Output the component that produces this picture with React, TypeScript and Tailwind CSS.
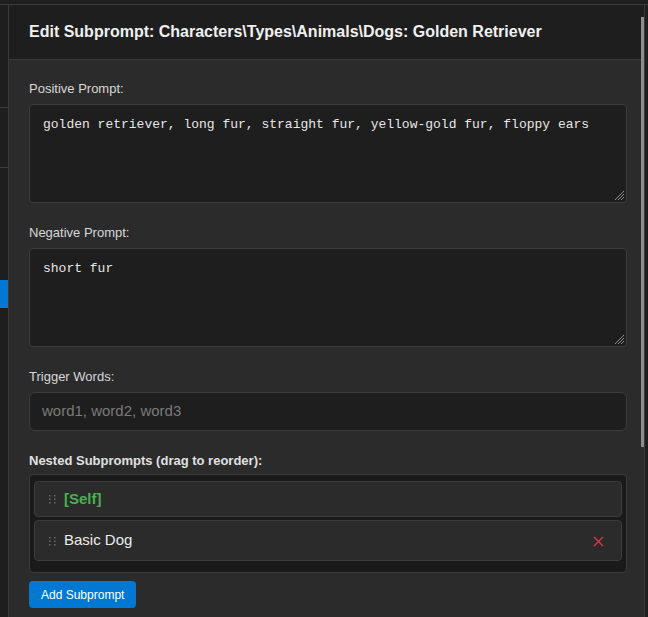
import React from "react";

type Sub = { name: string; self?: boolean };

const subs: Sub[] = [{ name: "[Self]", self: true }, { name: "Basic Dog" }];

const DragHandle: React.FC = () => (
  <svg width="8" height="10" viewBox="0 0 8 10" className="shrink-0">
    {[1, 4.5, 8].map((y) =>
      [1, 6].map((x) => <rect key={`${x}-${y}`} x={x} y={y} width="1.5" height="1.5" fill="#6a6a6a" />)
    )}
  </svg>
);

const Field: React.FC<{ label: string; children: React.ReactNode }> = ({ label, children }) => (
  <div className="mb-[22px]">
    <label className="block text-[13px] leading-[15px] mb-[8px] text-[#d8d8d8]">{label}</label>
    {children}
  </div>
);

const Grip: React.FC = () => (
  <svg width="12" height="12" viewBox="0 0 12 12" className="absolute right-[1px] bottom-[1px]">
    <path d="M11 2L2 11M11 5L5 11M11 8L8 11" stroke="#8a8a8a" strokeWidth="1" />
  </svg>
);

const mono = { fontFamily: '"Liberation Mono", "Courier New", monospace' };

const App: React.FC = () => {
  return (
    <div className="flex w-[648px] h-[617px] overflow-hidden bg-[#1e1e1e]" style={{ fontFamily: '"Liberation Sans", Arial, sans-serif' }}>
      {/* app behind the modal */}
      <div className="w-[8px] shrink-0 flex flex-col">
        <div className="h-[5px] border-b border-[#3a3a3a]" />
        <div className="h-[103px] border-b border-[#3a3a3a]" />
        <div className="h-[60px] border-b border-[#3a3a3a]" />
        <div className="h-[112px]" />
        <div className="h-[28px] bg-[#0078d4]" />
      </div>

      <div className="relative mt-[4px] w-[637px] shrink-0 border-l border-t border-r border-[#3a3a3a] bg-[#2b2b2b] text-white">
        <div className="absolute right-0 top-[12px] w-[3px] h-[430px] bg-[#8c8c8c]" />
        <div className="h-[55px] flex items-center pl-[20px] bg-[#1e1e1e] border-b border-[#3a3a3a]">
          <h2 className="text-[16px] font-bold text-[#f0f0f0]">
            Edit Subprompt: Characters\Types\Animals\Dogs: Golden Retriever
          </h2>
        </div>

        <div className="pl-[20px] pr-[17px] pt-[21px]">
          <Field label="Positive Prompt:">
            <div className="relative h-[99px] rounded-[4px] border border-[#3c3c3c] bg-[#1e1e1e] px-[13px] pt-[12px] text-[13px] leading-[15px] text-[#e6e6e6]" style={mono}>
              golden retriever, long fur, straight fur, yellow-gold fur, floppy ears
              <Grip />
            </div>
          </Field>

          <Field label="Negative Prompt:">
            <div className="relative h-[99px] rounded-[4px] border border-[#3c3c3c] bg-[#1e1e1e] px-[13px] pt-[12px] text-[13px] leading-[15px] text-[#e6e6e6]" style={mono}>
              short fur
              <Grip />
            </div>
          </Field>

          <Field label="Trigger Words:">
            <div className="h-[39px] rounded-[6px] border border-[#3c3c3c] bg-[#1e1e1e] px-[12px] flex items-center text-[15px] text-[#7a7a7a]">
              word1, word2, word3
            </div>
          </Field>

          <div>
            <label className="block text-[13px] leading-[15px] mb-[6px] font-bold text-[#e0e0e0]">
              Nested Subprompts (drag to reorder):
            </label>
            <div className="h-[99px] rounded-[4px] border border-[#3a3a3a] bg-[#1a1a1a] px-[4px] pt-[6px]">
              {subs.map((s) => (
                <div
                  key={s.name}
                  className={`flex items-center rounded-[4px] border border-[#3c3c3c] bg-[#2b2b2b] pl-[13px] pr-[17px] mb-[3px] ${s.self ? "h-[36px]" : "h-[41px]"}`}
                >
                  <DragHandle />
                  <span className={`ml-[8px] text-[15px] ${s.self ? "font-bold text-[#4caf50]" : "text-[#ececec]"}`}>{s.name}</span>
                  {!s.self && (
                    <svg width="11" height="11" viewBox="0 0 11 11" className="ml-auto mt-[2px]">
                      <path d="M1 1L10 10M10 1L1 10" stroke="#dc3545" strokeWidth="1.4" />
                    </svg>
                  )}
                </div>
              ))}
            </div>
            <button className="mt-[8px] h-[27px] px-[12px] rounded-[4px] bg-[#0078d4] text-[12px] text-white">
              Add Subprompt
            </button>
          </div>
        </div>
      </div>
      <div className="flex-1 mt-[4px] border-t border-[#3a3a3a] bg-[#1e1e1e]" />
    </div>
  );
};

export default App;
